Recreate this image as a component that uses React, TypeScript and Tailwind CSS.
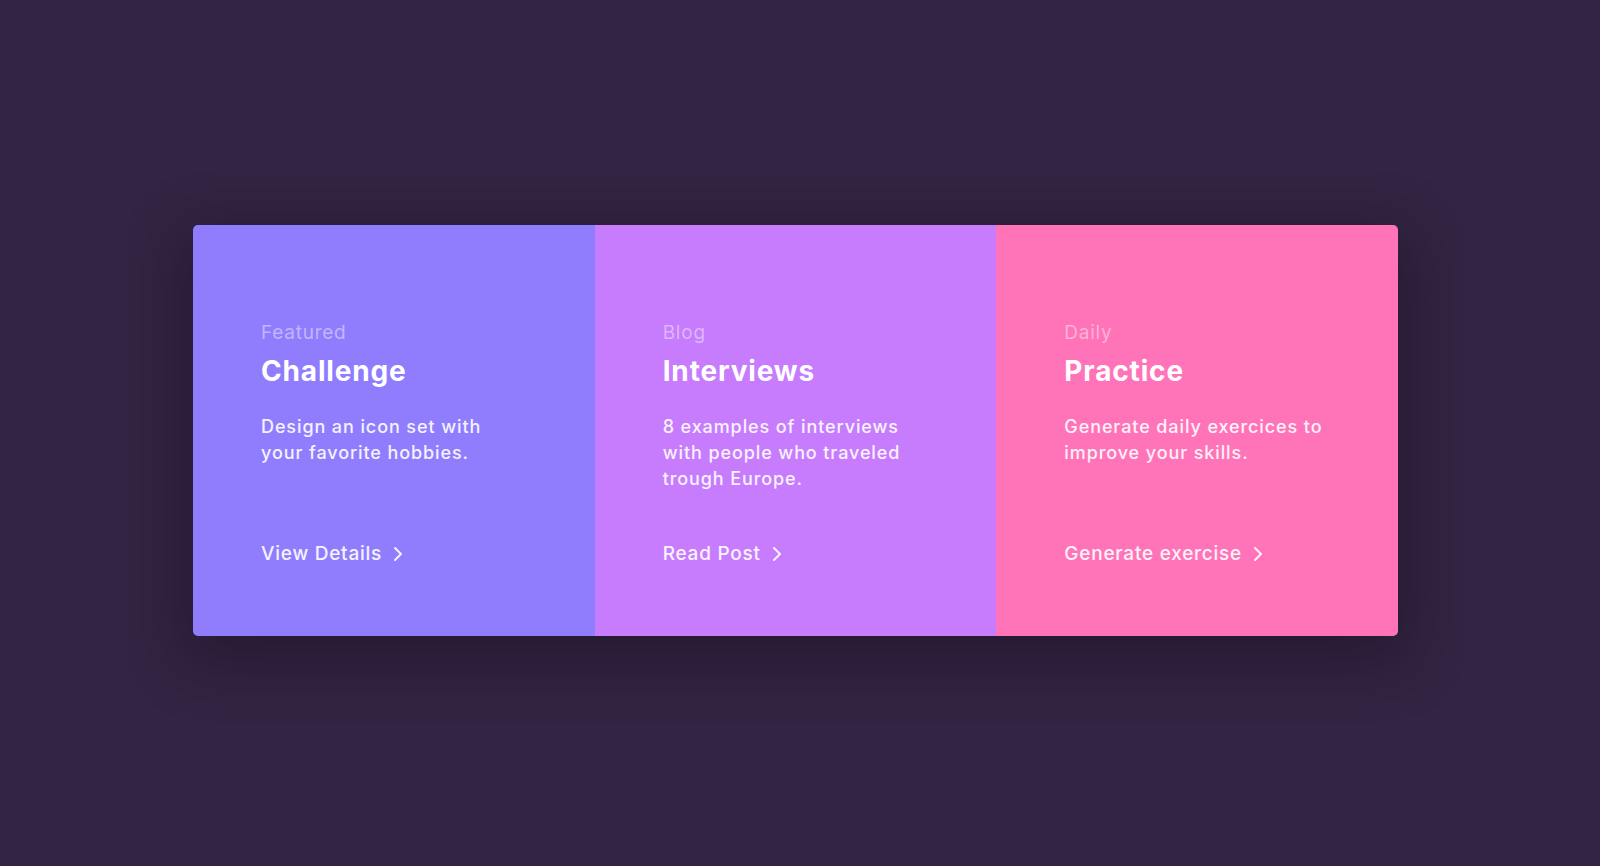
import React from 'react';

interface Tile {
  label: string;
  title: string;
  text: string;
  link: string;
  bg: string;
}

const tiles: Tile[] = [
  {
    label: 'Featured',
    title: 'Challenge',
    text: 'Design an icon set with your favorite hobbies.',
    link: 'View Details',
    bg: 'bg-[#8f7dfe]',
  },
  {
    label: 'Blog',
    title: 'Interviews',
    text: '8 examples of interviews with people who traveled trough Europe.',
    link: 'Read Post',
    bg: 'bg-[#c67cfc]',
  },
  {
    label: 'Daily',
    title: 'Practice',
    text: 'Generate daily exercices to improve your skills.',
    link: 'Generate exercise',
    bg: 'bg-[#ff74b8]',
  },
];

const Chevron: React.FC = () => (
  <svg width="10" height="16" viewBox="0 0 10 16" fill="none" className="ml-[11px]">
    <path d="M2 2l6 6-6 6" stroke="currentColor" strokeWidth="2" strokeLinecap="round" strokeLinejoin="round" />
  </svg>
);

const App: React.FC = () => {
  return (
    <div className="min-h-screen w-full bg-[#322442] pt-[225px] pl-[193px] font-['Inter',sans-serif]">
      <div className="flex w-[1205px] h-[411px] rounded-[5px] overflow-hidden shadow-[0_16px_60px_rgba(22,12,32,0.55)]">
        {tiles.map(tile => (
          <div key={tile.title} className={`flex-1 flex flex-col pl-[68px] pt-[96px] ${tile.bg}`}>
            <p className="text-[19px] leading-[24px] tracking-[0.04em] text-white/45">{tile.label}</p>
            <h3 className="mt-[8px] text-[28px] leading-[36px] font-bold tracking-[0.03em] text-white">{tile.title}</h3>
            <p className="mt-[25px] w-[262px] text-[18px] leading-[26px] font-medium tracking-[0.05em] text-white/90">{tile.text}</p>
            <a className="mt-auto mb-[70px] flex items-center text-[19px] leading-[24px] font-medium tracking-[0.04em] text-white/90">
              {tile.link}
              <Chevron />
            </a>
          </div>
        ))}
      </div>
    </div>
  );
};

export default App;
